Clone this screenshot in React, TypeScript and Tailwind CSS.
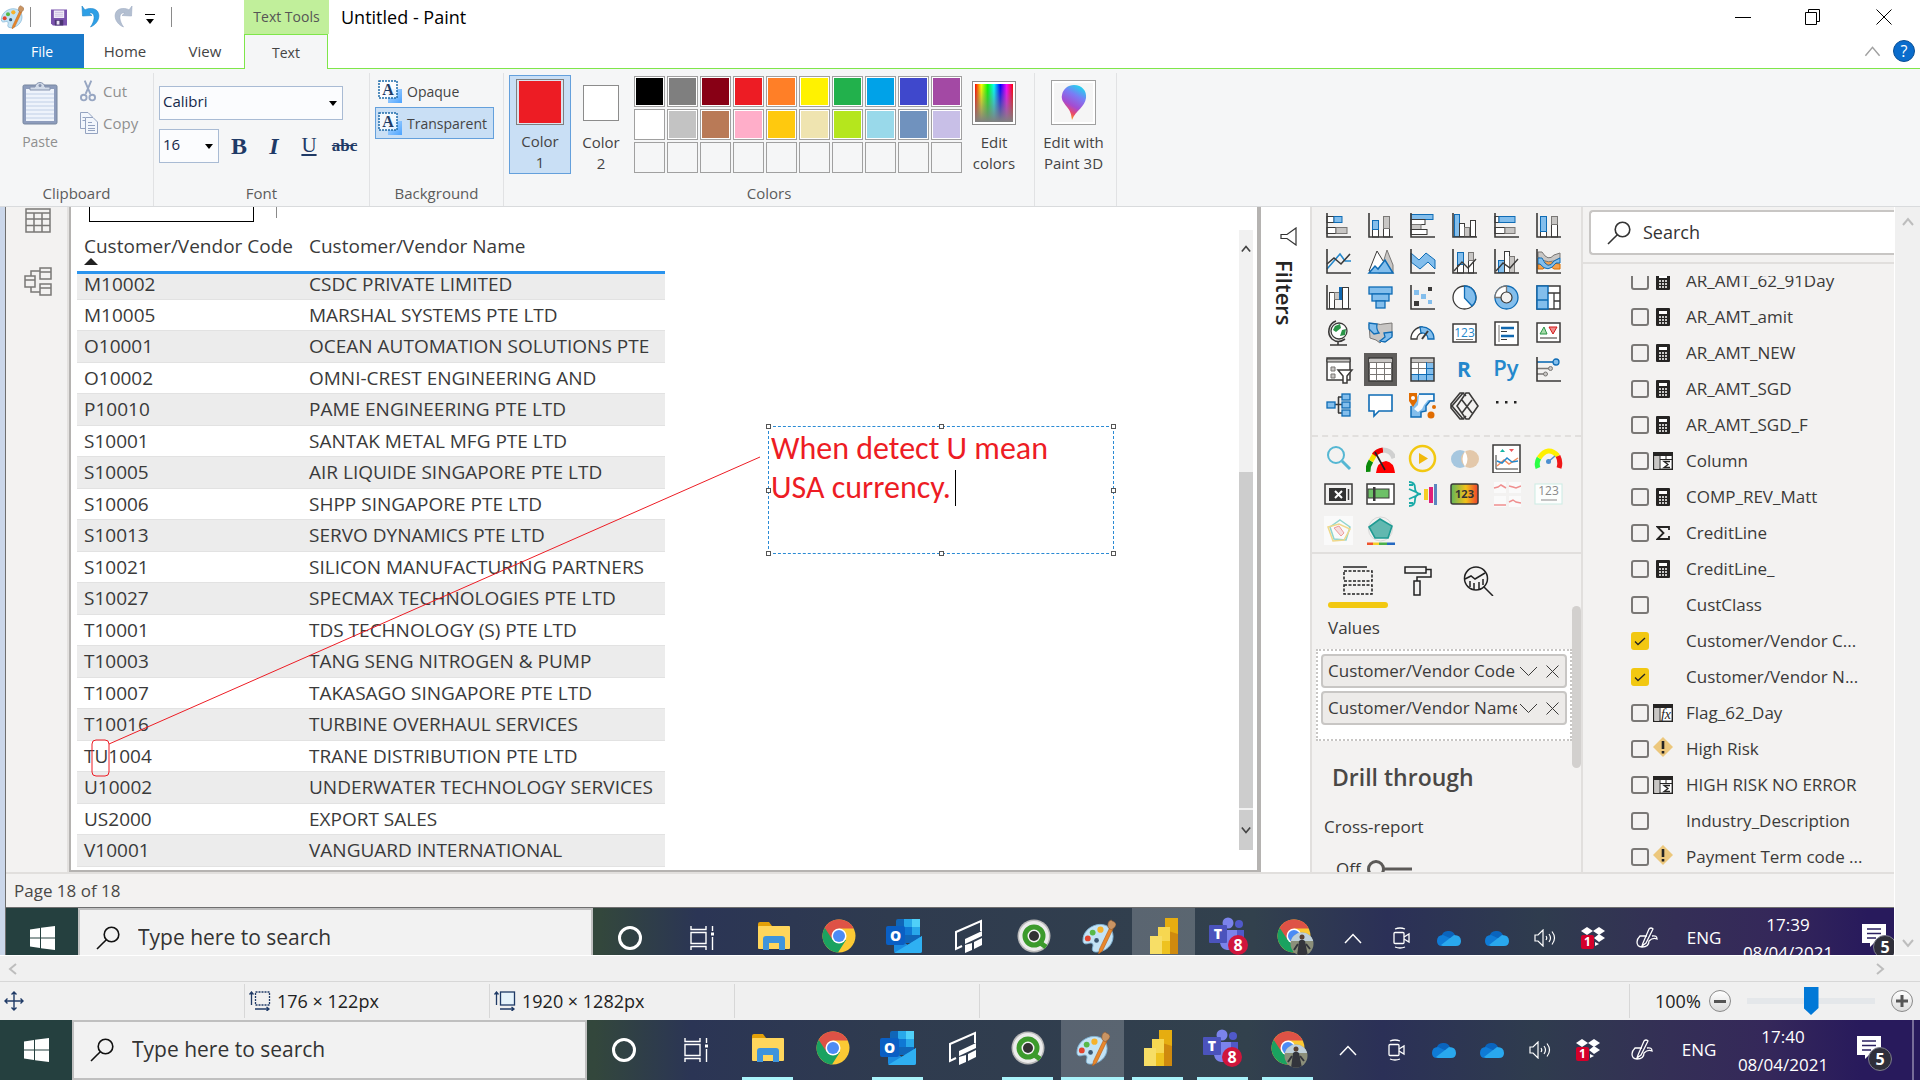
import type { ReactNode } from 'react'

const UI_FONT = 'font-[Open_Sans,Noto_Sans,sans-serif]'

const DARK = '#3b3a39'
const BLUE = '#83beec'
const BLUE_LINE = '#0f6cb5'
const GRAY = '#c8c6c4'
const GRAY_LINE = '#797775'

const PALETTE = [
  '#000000', '#7f7f7f', '#880015', '#ed1c24', '#ff7f27', '#fff200', '#22b14c', '#00a2e8', '#3f48cc', '#a349a4',
  '#ffffff', '#c3c3c3', '#b97a57', '#ffaec9', '#ffc90e', '#efe4b0', '#b5e61d', '#99d9ea', '#7092be', '#c8bfe7',
  '', '', '', '', '', '', '', '', '', '',
]

const ROWS: Array<[string, string]> = [
  ['M10002', 'CSDC PRIVATE LIMITED'],
  ['M10005', 'MARSHAL SYSTEMS PTE LTD'],
  ['O10001', 'OCEAN AUTOMATION SOLUTIONS PTE'],
  ['O10002', 'OMNI-CREST ENGINEERING AND'],
  ['P10010', 'PAME ENGINEERING PTE LTD'],
  ['S10001', 'SANTAK METAL MFG PTE LTD'],
  ['S10005', 'AIR LIQUIDE SINGAPORE PTE LTD'],
  ['S10006', 'SHPP SINGAPORE PTE LTD'],
  ['S10013', 'SERVO DYNAMICS PTE LTD'],
  ['S10021', 'SILICON MANUFACTURING PARTNERS'],
  ['S10027', 'SPECMAX TECHNOLOGIES PTE LTD'],
  ['T10001', 'TDS TECHNOLOGY (S) PTE LTD'],
  ['T10003', 'TANG SENG NITROGEN & PUMP'],
  ['T10007', 'TAKASAGO SINGAPORE PTE LTD'],
  ['T10016', 'TURBINE OVERHAUL SERVICES'],
  ['TU1004', 'TRANE DISTRIBUTION PTE LTD'],
  ['U10002', 'UNDERWATER TECHNOLOGY SERVICES'],
  ['US2000', 'EXPORT SALES'],
  ['V10001', 'VANGUARD INTERNATIONAL'],
]

type FieldIcon = 'calc' | 'column' | 'sigma' | 'fx' | 'warn' | 'none'

const FIELDS: Array<{ name: string; icon: FieldIcon; checked?: boolean }> = [
  { name: 'AR_AMT_62_91Day', icon: 'calc' },
  { name: 'AR_AMT_amit', icon: 'calc' },
  { name: 'AR_AMT_NEW', icon: 'calc' },
  { name: 'AR_AMT_SGD', icon: 'calc' },
  { name: 'AR_AMT_SGD_F', icon: 'calc' },
  { name: 'Column', icon: 'column' },
  { name: 'COMP_REV_Matt', icon: 'calc' },
  { name: 'CreditLine', icon: 'sigma' },
  { name: 'CreditLine_', icon: 'calc' },
  { name: 'CustClass', icon: 'none' },
  { name: 'Customer/Vendor C...', icon: 'none', checked: true },
  { name: 'Customer/Vendor N...', icon: 'none', checked: true },
  { name: 'Flag_62_Day', icon: 'fx' },
  { name: 'High Risk', icon: 'warn' },
  { name: 'HIGH RISK NO ERROR', icon: 'column' },
  { name: 'Industry_Description', icon: 'none' },
  { name: 'Payment Term code ...', icon: 'warn' },
]

/* ---------- small drawings ---------- */

function PaintIcon({ size }: { size: number }) {
  return (
    <svg width={size} height={size} viewBox="0 0 36 36">
      <path d="M16 6C25 4 33 9 33 18c0 9-8 16-17 16-4 0-5-2-4-5s0-5-4-4c-3 1-6 1-6-3C2 14 8 8 16 6Z" fill="#c3e3f5" stroke="#7fb2d3" />
      <circle cx="7" cy="20" r="3" fill="#e2452f" />
      <circle cx="12" cy="14" r="3" fill="#58b947" />
      <circle cx="20" cy="11" r="3.2" fill="#f6b22c" />
      <circle cx="16" cy="22" r="2.4" fill="#3c5872" />
      <path d="M30 8 33 10 22 33 18 36 19 31Z" fill="#e8872b" stroke="#b35c16" strokeWidth=".6" />
      <path d="M28 9c-1-4 0-7 3-8 2 2 5 2 5 5-1 3-3 4-5 5Z" fill="#c99463" stroke="#8b5a30" strokeWidth=".6" />
    </svg>
  )
}

function Magnifier({ size, color }: { size: number; color: string }) {
  return (
    <svg width={size} height={size} viewBox="0 0 24 24" fill="none" stroke={color} strokeWidth="1.6">
      <circle cx="15.5" cy="8.5" r="7.3" />
      <path d="M10.3 13.7 1 23" />
    </svg>
  )
}

function Chevron({ dir, size = 12, color = '#bdbdbd', weight = 2 }: { dir: 'up' | 'down' | 'left' | 'right'; size?: number; color?: string; weight?: number }) {
  const d = { up: 'M1 9 6 3 11 9', down: 'M1 3 6 9 11 3', left: 'M9 1 3 6 9 11', right: 'M3 1 9 6 3 11' }[dir]
  return (
    <svg width={size} height={size} viewBox="0 0 12 12" fill="none" stroke={color} strokeWidth={weight}>
      <path d={d} />
    </svg>
  )
}

function Caret() {
  return (
    <svg width="8" height="5" viewBox="0 0 8 5">
      <path d="M0 0H8L4 5Z" fill="#000" />
    </svg>
  )
}

function SelectionIcon() {
  return (
    <svg width="24" height="23" viewBox="0 0 24 23" className="shrink-0">
      <defs>
        <linearGradient id="selBlue" x1="0" y1="0" x2="1" y2="1">
          <stop offset="0" stopColor="#b9dcff" />
          <stop offset="1" stopColor="#4ba3ff" />
        </linearGradient>
      </defs>
      <rect x="10" y="9" width="14" height="14" fill="url(#selBlue)" />
      <rect x="1" y="1" width="18" height="17" fill="#fff" fillOpacity=".8" stroke="#1f6cab" strokeWidth="1.5" strokeDasharray="2 1" />
      <text x="10" y="15" textAnchor="middle" fontFamily="Liberation Serif, serif" fontWeight="700" fontSize="16" fill="#1f3c66">A</text>
    </svg>
  )
}

/* ---------- ribbon ---------- */

function Group({ label, className, children }: { label: string; className: string; children: ReactNode }) {
  return (
    <section className={`flex shrink-0 flex-col border-r border-[#e1e2e4] ${className}`}>
      <div className="flex flex-1">{children}</div>
      <div className="h-6 text-center text-[15px] leading-[22px] text-[#5c5c5c]">{label}</div>
    </section>
  )
}

function TitleBar() {
  return (
    <header className="relative shrink-0 bg-white">
      <div className="flex h-[34px] items-center">
        <div className="flex w-[244px] items-center">
          <PaintIcon size={24} />
          <span className="ml-1.5 h-5 w-px bg-[#8a8a8a]" />
          <button aria-label="Save" className="ml-5">
            <svg width="16" height="17" viewBox="0 0 17 17">
              <path d="M0 0H17V17H2L0 15Z" fill="#7a53ad" />
              <rect x="3" y="1" width="11" height="8" fill="#f4f0fa" />
              <path d="M4 3H13M4 5H13M4 7H13" stroke="#c6b8dd" />
              <rect x="4" y="11" width="9" height="6" fill="#4b3573" />
              <rect x="6" y="12" width="3" height="4" fill="#e9e2f5" />
            </svg>
          </button>
          <button aria-label="Undo" className="ml-3.5">
            <svg width="20" height="22" viewBox="0 0 20 22">
              <path d="M1 0 1.500 10 11 9.500 8 6.800C14 6 15 13 9.500 21 20 17 21 3 10.500 2.500 7.500 2.400 5 3 4 4Z" fill="#2d9fe6" stroke="#1c83c8" strokeWidth=".6" />
            </svg>
          </button>
          <button aria-label="Redo" className="ml-3">
            <svg width="20" height="22" viewBox="0 0 20 22">
              <path d="M19 0 18.500 10 9 9.500 12 6.800C6 6 5 13 10.500 21 0 17-1 3 9.500 2.500 12.500 2.400 15 3 16 4Z" fill="#b3bfd1" stroke="#9dabc2" strokeWidth=".6" />
            </svg>
          </button>
          <button aria-label="Customize" className="ml-3 flex flex-col items-center gap-1 pt-1">
            <span className="h-px w-2.5 bg-black" />
            <Caret />
          </button>
          <span className="ml-4 h-5 w-px bg-[#8a8a8a]" />
        </div>
        <div className="h-full w-[85px] bg-[#c1ef9b] text-center text-[14px] leading-[34px] text-[#555]">Text Tools</div>
        <h1 className="ml-3 flex-1 text-[18px] text-black">Untitled - Paint</h1>
        <div className="flex h-full">
          <button aria-label="Minimize" className="grid w-[70px] place-items-center">
            <span className="h-px w-4 bg-black" />
          </button>
          <button aria-label="Restore" className="grid w-[69px] place-items-center">
            <svg width="15" height="16" viewBox="0 0 15 16" fill="none" stroke="#000">
              <path d="M.5 3.500h11v12H.5ZM3.500 3.500V.5h11v12h-3" />
            </svg>
          </button>
          <button aria-label="Close" className="grid w-[73px] place-items-center">
            <svg width="16" height="16" viewBox="0 0 16 16" stroke="#000">
              <path d="M.5.5 15.500 15.500M15.500.5.5 15.500" />
            </svg>
          </button>
        </div>
      </div>
      <nav className="flex h-[35px] items-stretch text-[15px] text-[#444]">
        <button className="w-[84px] border-b border-[#7fe64a] bg-[#1979ca] text-[14px] text-white">File</button>
        <button className="w-[82px] border-b border-[#7fe64a]">Home</button>
        <button className="w-[78px] border-b border-[#7fe64a]">View</button>
        <button className="w-[84px] border-x border-t border-[#7fe64a] bg-[#f5f6f7] text-[14px]">Text</button>
        <div className="flex flex-1 items-center justify-end gap-3 border-b border-[#7fe64a] pr-[5px]">
          <Chevron dir="up" size={17} color="#a0a0a0" weight={1} />
          <button aria-label="Help" className="grid size-[22px] place-items-center rounded-full border border-[#0b4f94] bg-[#0a6ccc] text-[16px] leading-none text-white">?</button>
        </div>
      </nav>
    </header>
  )
}

function Ribbon() {
  return (
    <div className="flex h-[138px] shrink-0 overflow-hidden border-b border-[#d9dbdd] bg-[#f5f6f7] pt-1 text-[15px] text-[#444]">
      <Group label="Clipboard" className="w-[154px]">
        <button className="flex w-20 flex-col items-center pt-2 text-[14px] text-[#8f8f8f]">
          <svg width="36" height="44" viewBox="0 0 36 44">
            <rect x="1" y="4" width="34" height="39" rx="1.500" fill="#8d9cbc" stroke="#76869f" />
            <rect x="4" y="8" width="28" height="32" fill="#eef3fb" />
            <path d="M4 13H32M4 17H32M4 21H32M4 25H32M4 29H32M4 33H32M4 37H32" stroke="#c0cfe6" />
            <path d="M8 9V6h5c1-6 9-6 10 0h5v3Z" fill="#d2dbe9" stroke="#8694af" />
            <circle cx="18" cy="4.500" r="1.500" fill="#8694af" />
          </svg>
          <span className="mt-1.5">Paste</span>
        </button>
        <div className="flex flex-col gap-2 pt-[6px] text-[#8f8f8f]">
          <button className="flex h-6 items-center gap-[7px]">
            <svg width="16" height="24" viewBox="0 0 17 24" fill="none" stroke="#97a6c2" strokeWidth="2">
              <path d="M5 1 11 15M12 1 6 15" />
              <circle cx="4" cy="19" r="3" />
              <circle cx="13" cy="19" r="3" />
            </svg>
            Cut
          </button>
          <button className="flex h-6 items-center gap-[5px]">
            <svg width="18" height="22" viewBox="0 0 18 22" fill="#f2f6fc" stroke="#94a3c0">
              <path d="M.5.5H8L12.500 5V16.500H.5Z" />
              <path d="M5.500 5.500H13L17.500 10V21.500H5.500Z" />
              <path d="M8 10.500H12M8 13.500H15M8 16.500H15M8 18.500H15M2.500 5.500H5M2.500 8.500H5" />
            </svg>
            Copy
          </button>
        </div>
      </Group>

      <Group label="Font" className="w-[216px]">
        <div className="pl-[5px] pr-2 pt-[13px]">
          <div className="flex h-[34px] w-[184px] items-center border border-[#a9bbd4] bg-[#fbfcfe] pr-[5px]">
            <select aria-label="Font family" className="h-full flex-1 appearance-none bg-transparent px-[3px] pb-1 text-[15px] text-[#16294a]">
              <option>Calibri</option>
            </select>
            <Caret />
          </div>
          <div className="mt-2 flex items-center">
            <div className="flex h-[34px] w-[60px] items-center border border-[#a9bbd4] bg-[#fbfcfe] pr-[5px]">
              <select aria-label="Font size" className="h-full w-10 flex-1 appearance-none bg-transparent px-[3px] pb-1 text-[15px] text-[#16294a]">
                <option>16</option>
              </select>
              <Caret />
            </div>
            <div className="ml-0.5 flex font-[Liberation_Serif,serif] text-[#1f3a66]">
              <button className="w-9 text-[24px] font-bold">B</button>
              <button className="w-[34px] text-[24px] font-bold italic">I</button>
              <button className="w-9 text-[21px] underline underline-offset-2">U</button>
              <button className="w-[35px] text-[17px] font-bold line-through">abc</button>
            </div>
          </div>
        </div>
      </Group>

      <Group label="Background" className="w-[134px]">
        <div className="pl-[5px] pt-0.5 text-[14px]">
          <button className="flex h-8 w-[119px] items-center gap-[5px] px-[3px]">
            <SelectionIcon />
            Opaque
          </button>
          <button className="flex h-8 w-[119px] items-center gap-[5px] border border-[#64a0dc] bg-[#c9dff5] px-0.5">
            <SelectionIcon />
            Transparent
          </button>
        </div>
      </Group>

      <Group label="Colors" className="w-[531px]">
        <button className="ml-[5px] mt-0.5 flex h-[99px] w-[62px] flex-col items-center border border-[#64a0dc] bg-[#c9dff5] pt-[3px] leading-[21px]">
          <span className="mb-1.5 grid size-12 place-items-center border border-[#7f7f7f] bg-[#dbe3ee]">
            <span className="size-[42px] bg-[#ed1c24]" />
          </span>
          Color
          <span>1</span>
        </button>
        <button className="flex w-[60px] flex-col items-center pt-3 leading-[21px]">
          <span className="mb-[11px] size-9 border border-[#8c8c8c] bg-white" />
          Color
          <span>2</span>
        </button>
        <div className="ml-[3px] mt-[3px] grid h-[97px] grid-cols-10 gap-0.5">
          {PALETTE.map((c, i) => (
            <button
              key={i}
              aria-label={`Color ${c || 'empty'}`}
              className="size-[31px] border border-[#a0a0a0] p-px"
              style={{ backgroundColor: c ? '#fff' : undefined }}
            >
              <span className="block size-full" style={{ backgroundColor: c || undefined }} />
            </button>
          ))}
        </div>
        <button className="ml-[9px] flex w-[46px] flex-col items-center pt-2 leading-[21px]">
          <span className="mb-[7px] block size-11 shrink-0 border border-[#8c8c8c] bg-white p-0.5">
            <span className="block size-full bg-[linear-gradient(to_top,#808080,transparent),linear-gradient(to_right,#f00,#ff0,#0f0,#0ff,#00f,#f0f,#f00)]" />
          </span>
          Edit
          <span>colors</span>
        </button>
      </Group>

      <Group label="" className="w-[82px]">
        <button className="flex flex-1 flex-col items-center pr-1 pt-[7px] leading-[21px]">
          <span className="mb-[7px] grid size-[45px] shrink-0 place-items-center border border-[#a0a0a0] bg-white">
            <svg width="39" height="39" viewBox="0 0 39 39">
              <defs>
                <linearGradient id="drop" x1=".7" y1="0" x2=".3" y2="1">
                  <stop offset="0" stopColor="#1fd6ee" />
                  <stop offset=".3" stopColor="#7a7cf5" />
                  <stop offset=".6" stopColor="#a54bd0" />
                  <stop offset=".78" stopColor="#e8476f" />
                  <stop offset="1" stopColor="#ffb400" />
                </linearGradient>
              </defs>
              <rect width="39" height="39" fill="#f5f5f5" />
              <path d="M20 2c8 0 13 6 12 13-1 9-10 12-14 22-1-6-1-8-5-13C9 19 7 16 8 12 9 6 14 2 20 2Z" fill="url(#drop)" />
            </svg>
          </span>
          Edit with
          <span>Paint 3D</span>
        </button>
      </Group>
    </div>
  )
}

/* ---------- report page inside the picture ---------- */

function ReportTable() {
  return (
    <table className="w-[588px] table-fixed border-collapse text-left text-[19px] text-[#3a3a3a]">
      <thead>
        <tr className="h-[50px] border-b-[3px] border-[#2b94ee] align-top">
          <th className="w-[225px] whitespace-nowrap pl-[7px] pt-2.5 font-normal leading-7">
            Customer/Vendor Code
            <svg width="14" height="7" viewBox="0 0 14 7" className="-mt-0.5">
              <path d="M7 0 14 7H0Z" fill="#222" />
            </svg>
          </th>
          <th className="whitespace-nowrap pl-[7px] pt-2.5 font-normal leading-7">Customer/Vendor Name</th>
        </tr>
      </thead>
      <tbody>
        {ROWS.map(([code, name], i) => {
          const size = i === 0 ? 'h-[27px] align-top leading-[21px]' : i % 2 === 0 ? 'h-8 leading-[28px]' : 'h-[31px] leading-[30px]'
          const tone = i % 2 === 0 ? 'border-y border-[#e2e2e2] bg-[#ececec]' : ''
          const edge = i === 0 ? 'border-t-0' : ''
          return (
            <tr key={code} className={`${size} ${tone} ${edge}`}>
              <td className="whitespace-nowrap p-0 pl-[7px]">{code}</td>
              <td className="whitespace-nowrap p-0 pl-[7px]">{name}</td>
            </tr>
          )
        })}
      </tbody>
    </table>
  )
}

function Handle({ className }: { className: string }) {
  return <span className={`absolute size-[5px] border border-[#555] bg-white ${className}`} />
}

function ReportPage() {
  return (
    <div className="relative flex min-w-0 flex-1 overflow-hidden border-b-2 border-l-2 border-r-4 border-[#b5b3b1] bg-white">
      <div className="flex-1 pl-1.5">
        <div className="flex h-[15px] items-start gap-[22px] pl-3">
          <div className="h-[15px] w-[165px] border border-t-0 border-black" />
          <div className="h-[11px] w-px bg-[#8a8a8a]" />
        </div>
        <ReportTable />
      </div>
      <div className="mb-5 mr-1 mt-[23px] flex w-[14px] flex-col items-center bg-[#f1f1f1]">
        <div className="flex h-[242px] shrink-0 items-start pt-3.5">
          <Chevron dir="up" size={10} color="#444" />
        </div>
        <div className="mb-0.5 w-full flex-1 bg-[#cdcdcd]" />
        <div className="grid h-10 w-full place-items-center bg-[#cdcdcd]">
          <Chevron dir="down" size={10} color="#444" />
        </div>
      </div>

      {/* hand-drawn annotation over the page */}
      <svg className="absolute left-0 top-0" width="700" height="600" fill="none" stroke="#ed1c24">
        <path d="M38 537 689 250" />
        <rect x="21" y="533" width="17" height="36" rx="4" />
      </svg>
      <div className="absolute left-[697px] top-[219px] h-[128px] w-[346px] border border-dashed border-[#2a8ad4] pl-0.5 pt-0.5">
        <textarea
          aria-label="Annotation"
          defaultValue={'When detect U mean\nUSA currency.'}
          className="block h-full w-full resize-none overflow-hidden bg-transparent font-[Carlito,Lato,sans-serif] text-[32px] leading-[39px] text-[#ed1c24] outline-none"
        />
        <span className="absolute left-[186px] top-[43px] h-9 w-px bg-black" />
        <Handle className="-left-[3px] -top-[3px]" />
        <Handle className="-top-[3px] left-1/2 -ml-0.5" />
        <Handle className="-right-[3px] -top-[3px]" />
        <Handle className="-left-[3px] top-1/2 -mt-0.5" />
        <Handle className="-right-[3px] top-1/2 -mt-0.5" />
        <Handle className="-bottom-[3px] -left-[3px]" />
        <Handle className="-bottom-[3px] left-1/2 -ml-0.5" />
        <Handle className="-bottom-[3px] -right-[3px]" />
      </div>
    </div>
  )
}

/* ---------- visual gallery ---------- */

const axes = <path d="M1 0V24H25" fill="none" stroke={DARK} strokeWidth="1.600" />

const VISUALS: Array<{ name: string; art: ReactNode }> = [
  {
    name: 'Stacked bar chart',
    art: (
      <>
        <rect x="1" y="3.500" width="7" height="6" fill="#fff" stroke={DARK} />
        <rect x="8" y="3.500" width="8" height="6" fill={BLUE} stroke={BLUE_LINE} />
        <rect x="1" y="14.500" width="9" height="6" fill="#fff" stroke={DARK} />
        <rect x="10" y="14.500" width="11" height="6" fill={GRAY} stroke={GRAY_LINE} />
        {axes}
      </>
    ),
  },
  {
    name: 'Stacked column chart',
    art: (
      <>
        <rect x="4.500" y="16" width="6" height="8" fill="#fff" stroke={DARK} />
        <rect x="4.500" y="7.500" width="6" height="9" fill={BLUE} stroke={BLUE_LINE} />
        <rect x="15.500" y="15" width="6" height="9" fill="#fff" stroke={DARK} />
        <rect x="15.500" y="3.500" width="6" height="12" fill={GRAY} stroke={GRAY_LINE} />
        {axes}
      </>
    ),
  },
  {
    name: 'Clustered bar chart',
    art: (
      <>
        <rect x="1" y="1.500" width="22" height="5" fill={BLUE} stroke={BLUE_LINE} />
        <rect x="1" y="6.500" width="14" height="5" fill="#fff" stroke={DARK} />
        <rect x="1" y="11.500" width="10" height="5" fill={GRAY} stroke={GRAY_LINE} />
        <rect x="1" y="16.500" width="16" height="5" fill="#fff" stroke={DARK} />
        {axes}
      </>
    ),
  },
  {
    name: 'Clustered column chart',
    art: (
      <>
        <rect x="2.500" y="1.500" width="5" height="22" fill={BLUE} stroke={BLUE_LINE} />
        <rect x="7.500" y="10.500" width="5" height="13" fill="#fff" stroke={DARK} />
        <rect x="12.500" y="14.500" width="5" height="9" fill={GRAY} stroke={GRAY_LINE} />
        <rect x="18.500" y="7.500" width="5" height="16" fill="#fff" stroke={DARK} />
        {axes}
      </>
    ),
  },
  {
    name: '100% stacked bar chart',
    art: (
      <>
        <rect x="1" y="3.500" width="4" height="6" fill="#fff" stroke={DARK} />
        <rect x="5" y="3.500" width="16" height="6" fill={BLUE} stroke={BLUE_LINE} />
        <rect x="1" y="14.500" width="10" height="6" fill="#fff" stroke={DARK} />
        <rect x="11" y="14.500" width="10" height="6" fill={GRAY} stroke={GRAY_LINE} />
        {axes}
      </>
    ),
  },
  {
    name: '100% stacked column chart',
    art: (
      <>
        <rect x="4.500" y="18" width="6" height="6" fill="#fff" stroke={DARK} />
        <rect x="4.500" y="3.500" width="6" height="15" fill={BLUE} stroke={BLUE_LINE} />
        <rect x="15.500" y="11" width="6" height="13" fill="#fff" stroke={DARK} />
        <rect x="15.500" y="3.500" width="6" height="8" fill={GRAY} stroke={GRAY_LINE} />
        {axes}
      </>
    ),
  },
  {
    name: 'Line chart',
    art: (
      <>
        <path d="M1 20 14 5 19 12 25 12" fill="none" stroke="#2488cc" strokeWidth="1.600" />
        <path d="M1 15 8 9 15 15 24 5" fill="none" stroke={DARK} strokeWidth="1.600" />
        {axes}
      </>
    ),
  },
  {
    name: 'Area chart',
    art: (
      <>
        <path d="M12 24 19 1 25 16V24Z" fill={GRAY} stroke={GRAY_LINE} />
        <path d="M1 22 9 2 17 15 12 24Z" fill="#fff" stroke={DARK} />
        <path d="M1 24 7 17 10 20 17 11 25 24Z" fill={BLUE} stroke={BLUE_LINE} strokeWidth="1.500" />
      </>
    ),
  },
  {
    name: 'Stacked area chart',
    art: (
      <>
        <path d="M1 4 9 11 16 4 25 11V20L18 13 10 20 1 13Z" fill={BLUE} stroke={BLUE_LINE} />
        {axes}
      </>
    ),
  },
  {
    name: 'Line and stacked column chart',
    art: (
      <>
        <rect x="5.500" y="15" width="6" height="9" fill="#fff" stroke={DARK} />
        <rect x="5.500" y="3.500" width="6" height="12" fill={BLUE} stroke={BLUE_LINE} />
        <rect x="16.500" y="11" width="5" height="13" fill="#fff" stroke={DARK} />
        <rect x="16.500" y="3.500" width="5" height="8" fill={GRAY} stroke={GRAY_LINE} />
        <path d="M2 22 10 13 16 19 24 10" fill="none" stroke={DARK} strokeWidth="1.400" />
        {axes}
      </>
    ),
  },
  {
    name: 'Line and clustered column chart',
    art: (
      <>
        <rect x="4.500" y="11.500" width="6" height="12" fill={BLUE} stroke={BLUE_LINE} />
        <rect x="10.500" y="2.500" width="5" height="21" fill="#fff" stroke={DARK} />
        <rect x="15.500" y="7.500" width="5" height="16" fill={GRAY} stroke={GRAY_LINE} />
        <path d="M2 22 9 14 16 19 24 10" fill="none" stroke={DARK} strokeWidth="1.400" />
        {axes}
      </>
    ),
  },
  {
    name: 'Ribbon chart',
    art: (
      <>
        <path d="M2 15H7Q12 8 17 14L24 15V20H18Q12 14 7 20H2Z" fill="#f3a14e" stroke="#d86c00" />
        <path d="M2 3H6Q12 13 18 6L24 4V9Q12 17 2 8Z" fill={GRAY} stroke={GRAY_LINE} />
        <path d="M2 9H6Q12 22 18 12L24 9V14H20Q12 25 4 15H2Z" fill={BLUE} stroke={BLUE_LINE} />
        {axes}
      </>
    ),
  },
  {
    name: 'Waterfall chart',
    art: (
      <>
        <rect x="3.500" y="7.500" width="5" height="16" fill="#fff" stroke={DARK} />
        <rect x="8.500" y="7.500" width="5" height="7" fill={GRAY} stroke={GRAY_LINE} />
        <rect x="13.500" y="2.500" width="3" height="12" fill="#1168b0" stroke="#1168b0" />
        <rect x="16.500" y="2.500" width="6" height="21" fill="#fff" stroke={DARK} />
        {axes}
      </>
    ),
  },
  {
    name: 'Funnel',
    art: (
      <g fill={BLUE} stroke={BLUE_LINE} strokeWidth="1.300">
        <rect x="1" y="2" width="23" height="7" />
        <rect x="4" y="9" width="17" height="7" />
        <rect x="8" y="16" width="9" height="7" />
      </g>
    ),
  },
  {
    name: 'Scatter chart',
    art: (
      <>
        <rect x="4" y="5" width="5" height="5" fill="#83beec" />
        <rect x="18" y="2" width="4" height="4" fill={DARK} />
        <rect x="11" y="9" width="5" height="5" fill="#83beec" />
        <rect x="4" y="16" width="5" height="5" fill={DARK} />
        <rect x="18" y="15" width="4" height="4" fill="#83beec" />
        {axes}
      </>
    ),
  },
  {
    name: 'Pie chart',
    art: (
      <>
        <circle cx="12.500" cy="12.500" r="11.500" fill="#fff" stroke={DARK} strokeWidth="1.300" />
        <path d="M12.500 1A11.500 11.500 0 0 1 20 21L12.500 13Z" fill={BLUE} stroke={BLUE_LINE} strokeWidth="1.300" />
      </>
    ),
  },
  {
    name: 'Donut chart',
    art: (
      <>
        <circle cx="12.500" cy="12.500" r="11.500" fill={BLUE} stroke={BLUE_LINE} strokeWidth="1.300" />
        <path d="M12.500 1A11.500 11.500 0 0 0 1 12.500H12.500Z" fill="#fff" stroke={GRAY_LINE} strokeWidth="1.300" />
        <circle cx="12.500" cy="12.500" r="5.500" fill="#f3f2f1" stroke={DARK} strokeWidth="1.200" />
      </>
    ),
  },
  {
    name: 'Treemap',
    art: (
      <>
        <rect x="1" y="1" width="23" height="23" fill="#fff" stroke={DARK} strokeWidth="1.500" />
        <path d="M1 1H12V24H1Z" fill={BLUE} stroke={BLUE_LINE} strokeWidth="1.500" />
        <path d="M1 15H12" stroke={BLUE_LINE} strokeWidth="1.500" />
        <path d="M12 8H24M18 8V24M18 16H24" stroke={DARK} strokeWidth="1.300" />
      </>
    ),
  },
  {
    name: 'Map',
    art: (
      <>
        <circle cx="13" cy="10" r="8" fill="#fff" stroke={DARK} strokeWidth="1.300" />
        <path d="M9 5 14 3 15 7 10 11 7 9ZM16 9 20 8 19 14 14 15Z" fill="#2a9547" />
        <path d="M10 0A11 11 0 0 0 6 18Q12 23 19 18M12 20V24M4 24H21" fill="none" stroke={DARK} strokeWidth="1.600" />
      </>
    ),
  },
  {
    name: 'Filled map',
    art: (
      <>
        <path d="M1 3H10Q12 4 15 3L24 2V15L19 20H14L12 22 8 19 2 17Z" fill={GRAY} stroke={GRAY_LINE} />
        <path d="M1 2 9 3Q8 8 11 12L6 13 1 8Z" fill={BLUE} stroke={BLUE_LINE} strokeWidth="1.300" />
        <path d="M16 12 24 11V16L17 21 12 20 17 16Z" fill={BLUE} stroke={BLUE_LINE} strokeWidth="1.300" />
      </>
    ),
  },
  {
    name: 'Gauge',
    art: (
      <>
        <path d="M1 18A11.500 11.500 0 0 1 12 6V12A6 6 0 0 0 7 18Z" fill="#fff" stroke={DARK} strokeWidth="1.300" />
        <path d="M10 6A12 12 0 0 1 24 18H18A6 6 0 0 0 11 12Z" fill={BLUE} stroke={BLUE_LINE} strokeWidth="1.300" />
        <path d="M12 18 18 10" stroke={DARK} strokeWidth="2" />
      </>
    ),
  },
  {
    name: 'Card',
    art: (
      <>
        <rect x="1" y="3" width="23" height="18" fill="#fff" stroke={DARK} strokeWidth="1.500" />
        <text x="12.500" y="16" textAnchor="middle" fontSize="12" fill="#2488cc">123</text>
        <path d="M4 18.500H21" stroke={GRAY_LINE} />
      </>
    ),
  },
  {
    name: 'Multi-row card',
    art: (
      <>
        <rect x="1" y="1" width="23" height="23" fill="#fff" stroke={DARK} strokeWidth="1.500" />
        <path d="M5 4V21" stroke={GRAY_LINE} />
        <path d="M7 7H20M7 15H20" stroke="#1168b0" strokeWidth="2.400" />
        <path d="M7 10.500H13M7 18.500H13" stroke={DARK} />
      </>
    ),
  },
  {
    name: 'KPI',
    art: (
      <>
        <rect x="1" y="2" width="23" height="19" fill="#fff" stroke={DARK} strokeWidth="1.500" />
        <path d="M4 13 8 6 11 13Z" fill="#a6dba8" stroke="#2a9547" />
        <path d="M13 6H21L17 13Z" fill="#f08c8c" stroke="#d01818" />
        <path d="M4 17H21" stroke={GRAY_LINE} strokeWidth="1.500" />
      </>
    ),
  },
  {
    name: 'Slicer',
    art: (
      <>
        <rect x="1" y="1" width="23" height="22" fill="#fff" stroke={DARK} strokeWidth="1.500" />
        <path d="M1 2H24V5H1Z" fill={GRAY} stroke={DARK} />
        <path d="M5 10H9V14H5ZM5 17H9V21H5Z" fill={GRAY} stroke={GRAY_LINE} />
        <path d="M12 13H26L21 19V26H17V19Z" fill="#fff" stroke={DARK} strokeWidth="1.500" />
      </>
    ),
  },
  {
    name: 'Table',
    art: (
      <>
        <rect x="1" y="1" width="23" height="23" fill="#fff" stroke={DARK} strokeWidth="1.500" />
        <path d="M1 2H24V5H1Z" fill={GRAY} />
        <path d="M1 5.500H24M1 11.500H24M1 17.500H24M8.500 5V24M16.500 5V24" stroke={GRAY_LINE} />
      </>
    ),
  },
  {
    name: 'Matrix',
    art: (
      <>
        <rect x="1" y="1" width="23" height="23" fill="#fff" />
        <path d="M16 5H24V24H1V17H16Z" fill={BLUE} />
        <path d="M1 2H24V5H1Z" fill={GRAY} />
        <path d="M1 5.500H24M1 11.500H16M8.500 5V17" stroke={GRAY_LINE} />
        <path d="M16.500 5V24M16 11.500H24M1 17.500H24M8.500 17V24" stroke={BLUE_LINE} />
        <rect x="1" y="1" width="23" height="23" fill="none" stroke={DARK} strokeWidth="1.500" />
      </>
    ),
  },
  {
    name: 'R script visual',
    art: <text x="12" y="20" textAnchor="middle" fontSize="21" fontWeight="700" fill="#2488cc">R</text>,
  },
  {
    name: 'Python visual',
    art: <text x="12" y="19" textAnchor="middle" fontSize="22" fontWeight="600" fill="#2488cc">Py</text>,
  },
  {
    name: 'Key influencers',
    art: (
      <>
        <path d="M1 5H17" stroke={BLUE_LINE} strokeWidth="1.600" />
        <circle cx="20" cy="5" r="3" fill={BLUE} stroke={BLUE_LINE} strokeWidth="1.300" />
        <path d="M1 11.500H13M1 17H8" stroke={GRAY_LINE} strokeWidth="1.500" />
        <circle cx="14.500" cy="11.500" r="2" fill={GRAY} stroke={GRAY_LINE} />
        <circle cx="9.500" cy="17" r="2" fill={GRAY} stroke={GRAY_LINE} />
        {axes}
      </>
    ),
  },
  {
    name: 'Decomposition tree',
    art: (
      <>
        <path d="M8 11.500H16M12.500 4V20M12 4H16M12 20H16" fill="none" stroke={DARK} strokeWidth="1.600" />
        <g fill={BLUE} stroke={BLUE_LINE} strokeWidth="1.300">
          <rect x="1" y="9" width="8" height="6" />
          <rect x="16" y="1" width="8" height="6" />
          <rect x="16" y="9" width="8" height="6" />
          <rect x="16" y="17" width="8" height="6" />
        </g>
      </>
    ),
  },
  {
    name: 'Q&A',
    art: <path d="M1 2H24V18H11L6 23V18H1Z" fill="#fff" stroke={BLUE_LINE} strokeWidth="1.600" />,
  },
  {
    name: 'ArcGIS map',
    art: (
      <>
        <path d="M9 1H24V8H20L16 13V18L11 19V24H1V13" fill={BLUE} stroke={BLUE_LINE} strokeWidth="1.500" />
        <path d="M9 2H23V7H18L14 12 12 16 8 19 4 16 8 12Z" fill="#f6fafd" />
        <path d="M-1 0H7V8L3 14-1 8Z" fill="#e06c00" />
        <circle cx="3" cy="5" r="2" fill="#fff" />
        <circle cx="24" cy="14" r="2" fill="#e06c00" />
        <circle cx="21" cy="22" r="3.500" fill="#e06c00" />
      </>
    ),
  },
  {
    name: 'Power Apps',
    art: (
      <g fill="none" stroke={DARK} strokeWidth="1.600">
        <path d="M8 0H11L0 13 11 26H8L-1 15V11ZM11 0 14 3M11 26 14 23" />
        <path d="M14 0H17L26 13 17 26H14L5 13ZM10 7 20 20M20 7 10 20" />
      </g>
    ),
  },
  {
    name: 'More visuals',
    art: (
      <g fill="#222">
        <rect x="2" y="8" width="2.500" height="2.500" />
        <rect x="11" y="8" width="2.500" height="2.500" />
        <rect x="20" y="8" width="2.500" height="2.500" />
      </g>
    ),
  },
]

const CUSTOM_VISUALS: Array<{ name: string; art: ReactNode }> = [
  {
    name: 'Text filter',
    art: (
      <g fill="none" stroke="#55b7d3">
        <circle cx="12" cy="11" r="8" strokeWidth="2" />
        <path d="M18 17 26 25" strokeWidth="3" />
      </g>
    ),
  },
  {
    name: 'Dial gauge',
    art: (
      <>
        <path d="M2 28A18 18 0 0 1 5 17" fill="none" stroke="#0a8a0a" strokeWidth="5" />
        <path d="M5 17 9 10" stroke="#f5e400" strokeWidth="5" />
        <path d="M8 11Q11 7 17 6" fill="none" stroke="#e00" strokeWidth="5" />
        <path d="M17 6Q25 6 28 14" fill="none" stroke="#d0d0d0" strokeWidth="5" />
        <path d="M10 29Q11 18 20 17 28 18 29 29Z" fill="#f00" />
        <path d="M9 8 19 26" stroke="#222" strokeWidth="1.600" />
      </>
    ),
  },
  {
    name: 'Play axis',
    art: (
      <>
        <circle cx="14.500" cy="14.500" r="12.500" fill="none" stroke="#f2c811" strokeWidth="2.500" />
        <path d="M11 9 20 14.500 11 20Z" fill="#f2b90b" />
      </>
    ),
  },
  {
    name: 'Venn diagram',
    art: (
      <>
        <circle cx="10" cy="15" r="9" fill="#a6c7df" />
        <circle cx="20" cy="15" r="9" fill="#e3c8aa" />
        <path d="M15 7.500Q20 15 15 22.500 10 15 15 7.500Z" fill="#fff" />
      </>
    ),
  },
  {
    name: 'Power KPI',
    art: (
      <>
        <rect x="1" y="1" width="27" height="28" fill="#fff" stroke={DARK} strokeWidth="1.500" />
        <path d="M8 8 10.500 5 13 8Z" fill="#13b5a4" />
        <path d="M17 5H22L19.500 8Z" fill="#f0555b" />
        <path d="M4 11V25H26" fill="none" stroke={DARK} />
        <path d="M5 22 12 16 17 20 26 14" fill="none" stroke="#f58d5e" strokeWidth="1.500" />
        <path d="M5 17 10 19 15 14 20 18 26 17" fill="none" stroke="#2488cc" strokeWidth="1.500" />
      </>
    ),
  },
  {
    name: 'Tachometer',
    art: (
      <g fill="none" strokeWidth="5">
        <path d="M4 24Q2 19 5 14" stroke="#2bff45" />
        <path d="M5 14Q14 1 24 12" stroke="#fff000" />
        <path d="M24 12Q27 18 25 24" stroke="#f01818" />
        <path d="M14 18 21 12" stroke="#4b8fd0" strokeWidth="1.500" />
        <circle cx="14.500" cy="17.500" r="2.500" fill="#4b8fd0" stroke="none" />
      </g>
    ),
  },
  {
    name: 'Filter card',
    art: (
      <>
        <rect x="1" y="4" width="27" height="20" fill="#f3f2f1" stroke={DARK} strokeWidth="1.500" />
        <rect x="5" y="8" width="17" height="13" fill="#333" />
        <path d="M11 11 18 18M18 11 11 18" stroke="#fff" strokeWidth="2" />
        <path d="M24.500 9V20" stroke={DARK} strokeWidth="1.500" />
      </>
    ),
  },
  {
    name: 'Bullet chart',
    art: (
      <>
        <rect x="1" y="4" width="27" height="20" fill="#fff" stroke={DARK} strokeWidth="1.500" />
        <rect x="2" y="9" width="21" height="9" fill="#6dc067" stroke={DARK} />
        <rect x="7" y="7" width="2.500" height="14" fill={DARK} />
      </>
    ),
  },
  {
    name: 'Drill down tree',
    art: (
      <>
        <g fill="none" stroke="#1aaba8" strokeWidth="1.800">
          <path d="M1 2Q7 2 7 8T13 14M1 9 10 13M1 19 10 15M1 26Q7 26 7 20T13 14M1 5H5M1 23H5" />
        </g>
        <rect x="16" y="9" width="4" height="11" fill="#f5cf25" />
        <rect x="21" y="7" width="4" height="16" fill="#e0207a" />
        <rect x="26" y="4" width="3" height="21" fill="#5a86c0" />
      </>
    ),
  },
  {
    name: 'Card with states',
    art: (
      <>
        <defs>
          <linearGradient id="states">
            <stop offset="0" stopColor="#5fb65a" />
            <stop offset=".55" stopColor="#f2c21a" />
            <stop offset="1" stopColor="#f0402c" />
          </linearGradient>
        </defs>
        <rect x="1" y="4" width="27" height="20" rx="2" fill="url(#states)" stroke={DARK} strokeWidth="1.500" />
        <text x="14.500" y="18" textAnchor="middle" fontSize="11" fontWeight="700" fill="#333">123</text>
      </>
    ),
  },
  {
    name: 'Small multiples',
    art: (
      <>
        <path d="M2 2H14V13H2ZM17 2H29V13H17ZM2 16H14V27H2ZM17 16H29V27H17Z" fill="#fafafa" />
        <path d="M2 8 6 7 9 5 14 8M17 6 21 7 24 8 29 6M2 25H14M17 22 21 20 24 22 29 23" fill="none" stroke="#ef8f8f" strokeWidth="1.500" />
      </>
    ),
  },
  {
    name: 'Advance card',
    art: (
      <>
        <rect x="1" y="4" width="27" height="20" fill="#fcfefd" stroke="#ccebe4" />
        <text x="14.500" y="15" textAnchor="middle" fontSize="12" fill="#8a8a8a">123</text>
        <path d="M7 20H23" stroke="#c4c4c4" strokeWidth="2" />
      </>
    ),
  },
  {
    name: 'Radar chart',
    art: (
      <>
        <rect width="29" height="29" fill="#fafafa" />
        <path d="M16 4 26 11 22 24 10 23 6 11Z" fill="none" stroke="#8fd4cf" strokeWidth="1.500" />
        <path d="M4 11 15 8 26 13 20 24 9 25Z" fill="none" stroke="#efd88a" strokeWidth="1.500" />
        <path d="M10 12 15 10 20 17 17 20Z" fill="#f6dede" stroke="#ee9b9b" />
      </>
    ),
  },
  {
    name: 'Polar chart',
    art: (
      <>
        <circle cx="14.500" cy="13" r="12" fill="none" stroke="#d8d8d8" />
        <path d="M14 3 26 10 22 22 9 22 3 11Z" fill="#62b8b0" stroke="#1f9b93" strokeWidth="1.600" />
        <path d="M1 28H7" stroke="#f0522c" strokeWidth="3" />
        <path d="M7 28H13" stroke="#f6cf2a" strokeWidth="3" />
        <path d="M13 28H21" stroke="#4bb04b" strokeWidth="3" />
        <path d="M21 28H29" stroke="#2468c0" strokeWidth="3" />
      </>
    ),
  },
]

function FieldWell({ name }: { name: string }) {
  return (
    <div className="flex h-[34px] items-center rounded-sm border-2 border-[#c8c6c4] bg-[#edebe9] pl-[5px] pr-1">
      <span className="min-w-0 flex-1 overflow-hidden whitespace-nowrap text-[17px] text-[#3b3a39]">{name}</span>
      <button aria-label={`${name} options`} className="mx-0.5">
        <svg width="19" height="12" viewBox="0 0 19 12" fill="none" stroke="#3b3a39">
          <path d="M1 2 9.500 10.500 18 2" />
        </svg>
      </button>
      <button aria-label={`Remove ${name}`} className="ml-1.5 mr-0.5">
        <svg width="13" height="13" viewBox="0 0 13 13" stroke="#3b3a39">
          <path d="M.5.5 12.500 12.500M12.500.5.5 12.500" />
        </svg>
      </button>
    </div>
  )
}

function VisualizationsPane() {
  return (
    <aside className="flex w-[273px] shrink-0 flex-col overflow-hidden border-l-2 border-r-2 border-[#e1dfdd] bg-[#f3f2f1]">
      <div className="grid shrink-0 grid-cols-[repeat(6,42px)] border-b-2 border-dashed border-[#e1dfdd] pb-3 pl-[5px]">
        {VISUALS.map((v) => (
          <button key={v.name} aria-label={v.name} className="grid h-9 place-items-center">
            <span className={v.name === 'Table' ? 'bg-[#5f5d5b] p-1' : 'p-1'}>
              <svg width="25" height="25" viewBox="0 0 25 25" className="overflow-visible">
                {v.art}
              </svg>
            </span>
          </button>
        ))}
      </div>
      <div className="grid shrink-0 grid-cols-[repeat(6,42px)] border-b-2 border-[#e1dfdd] pb-1 pl-[5px] pt-[3px]">
        {CUSTOM_VISUALS.map((v) => (
          <button key={v.name} aria-label={v.name} className="grid h-9 place-items-center">
            <svg width="29" height="29" viewBox="0 0 29 29">
              {v.art}
            </svg>
          </button>
        ))}
      </div>

      <div className="flex min-h-0 flex-1 overflow-hidden">
        <div className="min-w-0 flex-1 pl-1">
          <div className="flex pl-3">
            <button aria-label="Fields" className="flex w-[60px] flex-col items-center gap-1.5 pt-3">
              <svg width="30" height="30" viewBox="0 0 30 30" fill="none" stroke="#222" strokeWidth="1.500">
                <path d="M0 1H24" />
                <path d="M1 5H29V15H1ZM1 19H29V28H1Z" strokeDasharray="3 1.500" />
              </svg>
              <span className="h-1.5 w-full rounded-full bg-[#f2c811]" />
            </button>
            <button aria-label="Format" className="flex w-[60px] flex-col items-center pt-3">
              <svg width="28" height="30" viewBox="0 0 28 30" fill="none" stroke="#222" strokeWidth="1.500">
                <rect x="1" y="1" width="21" height="6" />
                <path d="M22 3.500H27V11H13V15" />
                <rect x="10" y="15" width="6" height="14" />
              </svg>
            </button>
            <button aria-label="Analytics" className="flex w-[60px] flex-col items-center pt-3">
              <svg width="31" height="30" viewBox="0 0 31 30" fill="none" stroke="#222" strokeWidth="1.500">
                <circle cx="13" cy="12.500" r="11.500" />
                <path d="M21 21 30 30M2 13 8 10 12 13 22 7M7 15V21M11 17V24M16 16V23M20 13V19" />
              </svg>
            </button>
          </div>
          <h2 className="pl-3 pt-2 text-[17px] leading-6 text-[#3b3a39]">Values</h2>
          <div className="mt-[9px] flex h-[92px] flex-col gap-[3px] border-2 border-dotted border-[#c8c6c4] bg-white p-[3px]">
            <FieldWell name="Customer/Vendor Code" />
            <FieldWell name="Customer/Vendor Name" />
          </div>
          <h2 className="pl-4 pt-5 text-[23px] font-semibold leading-8 text-[#4a4846]">Drill through</h2>
          <p className="pl-2 pt-[22px] text-[17px] leading-6 text-[#3b3a39]">Cross-report</p>
          <label className="flex items-center gap-1.5 pl-5 pt-[18px] text-[17px] leading-6 text-[#3b3a39]">
            Off
            <input type="checkbox" className="sr-only" />
            <svg width="46" height="18" viewBox="0 0 46 18" fill="none" stroke="#5c5a58" strokeWidth="3">
              <circle cx="9" cy="9" r="7.500" />
              <path d="M16 9H45" />
            </svg>
          </label>
        </div>
        <div className="mt-[52px] h-[162px] w-[9px] shrink-0 rounded-full bg-[#d2d0ce]" />
      </div>
    </aside>
  )
}

function FieldGlyph({ icon }: { icon: FieldIcon }) {
  if (icon === 'calc') {
    return (
      <svg width="14" height="18" viewBox="0 0 14 18">
        <rect width="14" height="18" rx="1" fill="#252423" />
        <rect x="3" y="3" width="8" height="3" fill="#fff" />
        <path d="M3 9H11M3 12H11M3 15H11" stroke="#fff" strokeWidth="1.600" strokeDasharray="2 1" />
      </svg>
    )
  }
  if (icon === 'sigma') {
    return (
      <svg width="14" height="14" viewBox="0 0 14 14" fill="none" stroke="#252423" strokeWidth="1.800">
        <path d="M13 4V1H1.500L7.500 7 1.500 13H13V10" />
      </svg>
    )
  }
  if (icon === 'warn') {
    return (
      <svg width="20" height="20" viewBox="0 0 20 20" className="mb-1">
        <path d="M10 0 20 10 10 20 0 10Z" fill="#ecc77c" />
        <path d="M10 4V12M10 14V16.500" stroke="#252423" strokeWidth="2.600" />
      </svg>
    )
  }
  if (icon === 'none') return null
  return (
    <svg width="20" height="18" viewBox="0 0 20 18">
      <rect x=".7" y=".7" width="18.600" height="16.600" fill="#fff" stroke="#252423" strokeWidth="1.400" />
      <rect width="20" height="4" fill="#252423" />
      <rect x="1.500" y="4" width="5" height="13" fill={GRAY} />
      <path d="M7 4V17" stroke="#252423" />
      {icon === 'column' ? (
        <>
          <path d="M7 7.500H19M13 4V7" stroke="#252423" />
          <path d="M17 9.500H11L15 12.500 11 15.500H17" fill="none" stroke="#252423" strokeWidth="1.300" />
        </>
      ) : (
        <text x="13" y="15" textAnchor="middle" fontFamily="Liberation Serif, serif" fontStyle="italic" fontSize="14" fill="#252423">fx</text>
      )}
    </svg>
  )
}

function FieldsPane() {
  return (
    <aside className="flex w-[311px] shrink-0 flex-col overflow-hidden bg-[#f3f2f1]">
      <div className="shrink-0 border-b-2 border-[#e1dfdd] pb-[7px] pl-1.5 pt-[3px]">
        <label className="flex h-[45px] items-center gap-3 rounded-l-sm border-2 border-r-0 border-[#c8c6c4] bg-white pl-4">
          <Magnifier size={24} color="#333" />
          <input type="text" aria-label="Search fields" placeholder="Search" className="min-w-0 flex-1 bg-transparent text-[18px] outline-none placeholder:text-[#333] placeholder:opacity-100" />
        </label>
      </div>
      <div className="mt-3 flex min-h-0 flex-1 flex-col justify-start overflow-hidden">
        <ul className="-mt-[13px]">
          {FIELDS.map((f) => (
            <li key={f.name}>
              <label className="flex h-9 items-center pl-12 text-[17px] text-[#3b3a39]">
                <span className="relative grid size-[18px] shrink-0 place-items-center">
                  <input
                    type="checkbox"
                    defaultChecked={f.checked}
                    className="size-[18px] appearance-none rounded-[3px] border-2 border-[#7a7876] checked:border-[#f2c811] checked:bg-[#f2c811]"
                  />
                  {f.checked && (
                    <svg width="12" height="9" viewBox="0 0 12 9" className="pointer-events-none absolute" fill="none" stroke="#252423" strokeWidth="1.300">
                      <path d="M1 4.500 4 7.500 11 1" />
                    </svg>
                  )}
                </span>
                <span className="grid w-7 shrink-0 place-items-center">
                  <FieldGlyph icon={f.icon} />
                </span>
                <span className="whitespace-nowrap pl-[9px]">{f.name}</span>
              </label>
            </li>
          ))}
        </ul>
      </div>
    </aside>
  )
}

/* ---------- taskbar ---------- */

function ChromeIcon({ avatar }: { avatar?: boolean }) {
  return (
    <svg width="40" height="40" viewBox="0 0 40 40">
      <circle cx="20" cy="20" r="16.500" fill="#fbc934" />
      <path d="M20 20 5.700 11.800A16.500 16.500 0 0 0 19 36.500L27 24 13 24Z" fill="#1aa260" />
      <path d="M20 12.500H34.700A16.500 16.500 0 0 0 5.700 11.800L13 23Z" fill="#de5246" />
      <circle cx="20" cy="20" r="7.500" fill="#fff" />
      <circle cx="20" cy="20" r="6" fill="#4c8bf5" />
      {avatar && (
        <>
          <defs>
            <clipPath id="face">
              <circle cx="28" cy="28" r="11.500" />
            </clipPath>
          </defs>
          <g clipPath="url(#face)">
            <rect x="16" y="16" width="24" height="24" fill="#8b8f7a" />
            <rect x="16" y="16" width="24" height="9" fill="#bfd0da" />
            <path d="M23 40 25 25Q28 22 31 25L34 40Z" fill="#33353c" />
            <path d="M24 28 20 34M32 28 36 33" stroke="#33353c" strokeWidth="2" />
            <circle cx="28" cy="21" r="2.500" fill="#5a4234" />
          </g>
        </>
      )}
    </svg>
  )
}

const APP_ICONS: Record<string, ReactNode> = {
  Explorer: (
    <svg width="34" height="28" viewBox="0 0 34 28">
      <path d="M1 2Q1 0 3 0H12L15 4H17V8H1Z" fill="#e3a008" />
      <rect x="1" y="4" width="32" height="23" rx="1" fill="#ffd65c" />
      <path d="M6 28V17Q6 14 9 14H25Q28 14 28 17V28H22V21H12V28Z" fill="#3f94dc" />
    </svg>
  ),
  Chrome: <ChromeIcon />,
  Outlook: (
    <svg width="36" height="34" viewBox="0 0 36 34">
      <rect x="10" y="0" width="24" height="24" rx="2" fill="#1066b8" />
      <path d="M18 0H26V8H18Z" fill="#28a8ea" />
      <path d="M26 0H34V8H26Z" fill="#50d0f8" />
      <path d="M18 8H26V16H18Z" fill="#0f78d4" />
      <path d="M26 8H34V16H26Z" fill="#28a8ea" />
      <path d="M8 17 22 26 36 17V32Q36 34 34 34H10Q8 34 8 32Z" fill="#1a8be0" />
      <path d="M8 34 36 17V32Q36 34 34 34Z" fill="#2fb0f2" />
      <rect x="0" y="7" width="19" height="19" rx="2" fill="#0a5fc4" />
      <text x="9.500" y="22" textAnchor="middle" fontSize="14" fontWeight="800" fill="#fff">O</text>
    </svg>
  ),
  Files: (
    <svg width="30" height="34" viewBox="0 0 30 34" fill="none" stroke="#fff" strokeWidth="2">
      <path d="M27 12V2L2 13V30L8 27" />
      <path d="M11 20 28 12V17L11 25ZM11 26 18 24V31L11 34ZM20 23 28 19V26L20 30Z" fill="#fff" stroke="none" />
    </svg>
  ),
  Qlik: (
    <svg width="34" height="34" viewBox="0 0 34 34">
      <circle cx="17" cy="17" r="16.500" fill="#b9b9b9" />
      <circle cx="17" cy="17" r="15" fill="#ececec" />
      <circle cx="17" cy="17" r="9" fill="#f4f4f4" stroke="#3c9b2c" strokeWidth="5" />
      <path d="M22 23 29 28" stroke="#3c9b2c" strokeWidth="5" />
      <circle cx="17" cy="17" r="5" fill="#333" />
    </svg>
  ),
  Paint: <PaintIcon size={35} />,
  'Power BI': (
    <svg width="28" height="36" viewBox="0 0 28 36">
      <rect x="15" y="0" width="13" height="36" fill="#cf8a0e" />
      <path d="M15 0H28V16L15 12Z" fill="#e6ad10" />
      <rect x="8" y="9" width="12" height="27" fill="#eec21f" />
      <rect x="8" y="9" width="12" height="14" fill="#f6d751" />
      <rect x="0" y="18" width="12" height="18" fill="#f7de66" />
    </svg>
  ),
  Teams: (
    <svg width="40" height="38" viewBox="0 0 40 38">
      <circle cx="19" cy="6" r="5.500" fill="#7b83eb" />
      <circle cx="30" cy="7" r="4" fill="#5059c9" />
      <path d="M24 13H35V22Q34 29 26 28Z" fill="#5059c9" />
      <path d="M11 13H28V26Q26 34 18 33 12 32 11 26Z" fill="#7b83eb" />
      <rect x="0" y="8" width="18" height="18" rx="1" fill="#4b53bc" />
      <text x="9" y="22" textAnchor="middle" fontSize="14" fontWeight="800" fill="#fff">T</text>
      <circle cx="29" cy="28" r="10" fill="#d0163c" />
      <text x="29" y="34" textAnchor="middle" fontSize="16" fontWeight="700" fill="#fff">8</text>
    </svg>
  ),
  'Chrome profile': <ChromeIcon avatar />,
}

function Cloud() {
  return (
    <svg width="24" height="16" viewBox="0 0 24 16">
      <path d="M4 7Q6 0 12 1 16 1 18 5L12 9Z" fill="#0a64bd" />
      <path d="M0 11Q0 5 6 5L17 10 8 16H5Q0 16 0 11Z" fill="#0f7bd6" />
      <path d="M4 15 17 5Q24 5 24 11 24 16 19 16H6Z" fill="#29a8ee" />
    </svg>
  )
}

function Taskbar({ time, active, indicators }: { time: string; active: string; indicators: string[] }) {
  return (
    <div className="flex h-[60px] w-full items-stretch overflow-hidden bg-[linear-gradient(to_right,#25403f_0%,#25403f_4%,#33473c_31%,#2b3555_36%,#2f3b4f_46%,#32414d_65%,#2b3057_72%,#2f3c4e_80%,#342f56_87%,#35285a_92%,#281a5c_97%)] text-white">
      <button aria-label="Start" className="grid w-[72px] shrink-0 place-items-center">
        <svg width="25" height="24" viewBox="0 0 25 24" fill="#fff">
          <path d="M0 3.500 10 2V11.500H0ZM11 1.800 25 0V11.500H11ZM0 12.500H10V22L0 20.500ZM11 12.500H25V24L11 22.200Z" />
        </svg>
      </button>
      <label className="flex w-[515px] shrink-0 items-center gap-3 border-2 border-[#c0c0c0] bg-[#f2f2f2] pl-4">
        <Magnifier size={24} color="#111" />
        <input type="text" aria-label="Search Windows" placeholder="Type here to search" className="min-w-0 flex-1 bg-transparent pl-1.5 text-[21px] outline-none placeholder:text-[#333] placeholder:opacity-100" />
      </label>
      <button aria-label="Cortana" className="grid w-[73px] shrink-0 place-items-center">
        <span className="size-6 rounded-full border-[3px] border-white" />
      </button>
      <button aria-label="Task view" className="grid w-[73px] shrink-0 place-items-center">
        <svg width="25" height="24" viewBox="0 0 25 24" fill="none" stroke="#fff" strokeWidth="1.400">
          <path d="M1 0V3.500H16V0M1 24V20.500H16V24M1 6.500H16V17.500H1ZM22.500 0V5M22.500 11V24" />
          <rect x="21" y="6.500" width="3" height="3" fill="#fff" stroke="none" />
        </svg>
      </button>
      <div className="flex shrink-0 pl-0.5">
        {Object.keys(APP_ICONS).map((name) => (
          <button
            key={name}
            aria-label={name}
            className={`relative mx-px grid w-[63px] shrink-0 place-items-center pb-1 ${name === active ? 'bg-white/20' : ''}`}
          >
            {APP_ICONS[name]}
            {indicators.includes(name) && (
              <span className={`absolute bottom-0 h-[3px] bg-[#a9f3fb] ${name === active ? 'inset-x-0' : 'inset-x-1.5'}`} />
            )}
          </button>
        ))}
      </div>

      <div className="ml-auto flex shrink-0 items-stretch">
        <button aria-label="Show hidden icons" className="grid w-12 place-items-center">
          <svg width="18" height="11" viewBox="0 0 18 11" fill="none" stroke="#fff" strokeWidth="1.500">
            <path d="M1 10 9 1.500 17 10" />
          </svg>
        </button>
        <button aria-label="Meet now" className="grid w-12 place-items-center">
          <svg width="17" height="22" viewBox="0 0 17 22" fill="none" stroke="#fff" strokeWidth="1.300">
            <rect x="1" y="5.500" width="10" height="11" rx="1" />
            <path d="M11 10 16 7V15L11 12M2 2Q7 0 12 2M2 20Q7 22 12 20" />
          </svg>
        </button>
        <button aria-label="OneDrive" className="grid w-12 place-items-center"><Cloud /></button>
        <button aria-label="OneDrive work" className="grid w-12 place-items-center"><Cloud /></button>
        <button aria-label="Volume" className="grid w-12 place-items-center">
          <svg width="23" height="18" viewBox="0 0 23 18" fill="none" stroke="#fff" strokeWidth="1.200">
            <path d="M1 6H4L9 1V17L4 12H1ZM12 7Q13.500 9 12 11M15 5Q18 9 15 13M18 2.500Q23 9 18 15.500" />
          </svg>
        </button>
        <button aria-label="Dropbox" className="grid w-12 place-items-center">
          <svg width="24" height="23" viewBox="0 0 24 23" className="overflow-visible">
            <path d="M6 0 12 4 6 8 0 4ZM18 0 24 4 18 8 12 4ZM18 7 24 11 18 15 13 11ZM14 15 18 17 14 19Z" fill="#fff" />
            <rect x="0" y="8" width="13" height="14" rx="2" fill="#d4002a" />
            <text x="6.500" y="19" textAnchor="middle" fontSize="12" fontWeight="700" fill="#fff">1</text>
          </svg>
        </button>
        <button aria-label="Windows Ink" className="grid w-[60px] place-items-center">
          <svg width="22" height="22" viewBox="0 0 22 22" fill="none" stroke="#fff" strokeWidth="1.300">
            <path d="M7 16 13 2Q15 0 17 2L10 16 6 19ZM11 9H4Q1 12 1 15 1 20 6 20 13 20 13 14 17 10 21 12 21 8 16 9" />
          </svg>
        </button>
        <button className="w-[54px] text-[17px]">ENG</button>
        <button className="w-[114px] whitespace-nowrap pt-0.5 text-center text-[17px] leading-7">
          <span className="block">{time}</span>
          <span className="block">08/04/2021</span>
        </button>
        <button aria-label="Notifications" className="relative grid w-[72px] place-items-center pr-1 pt-1">
          <svg width="38" height="38" viewBox="0 0 38 38">
            <path d="M2 3H26V22H14L10 26V22H2Z" fill="#fff" />
            <path d="M7 8H21M7 12.500H21M7 17H16" stroke="#2b2060" strokeWidth="1.300" />
            <circle cx="25" cy="26" r="11.500" fill="#2f2f3a" stroke="#7c7c8c" />
            <text x="25" y="32" textAnchor="middle" fontSize="16" fontWeight="700" fill="#fff">5</text>
          </svg>
        </button>
        <div className="w-2 border-l-2 border-[#776d99]" />
      </div>
    </div>
  )
}

/* ---------- workspace ---------- */

function Picture() {
  return (
    <div className="flex min-w-0 flex-1 overflow-hidden">
      <div className="w-[5px] shrink-0 bg-[#cbd7ea]" />
      <div className="flex min-w-0 flex-1 flex-col overflow-hidden border-l border-[#6f6f6f]">
        <div className="flex min-h-0 flex-1 overflow-hidden">
          <div className="flex w-[61px] shrink-0 flex-col items-center gap-[34px] bg-[#f3f2f1] pl-[3px]">
            <svg width="26" height="25" viewBox="0 0 26 25" fill="none" stroke="#7a7876" strokeWidth="1.500" className="mt-px">
              <path d="M1 1H25V24H1ZM1 5H25M1 11H25M1 17.500H25M9 5V24M17 5V24" />
            </svg>
            <svg width="28" height="29" viewBox="0 0 28 29" fill="none" stroke="#7a7876" strokeWidth="1.500">
              <path d="M1 9H11V20H1ZM1 13H11M16 1H27V12H16ZM16 5H27M16 17H27V28H16ZM16 21H27M7 9V4H16M7 20V25H16" />
            </svg>
          </div>
          <div className="w-0.5 shrink-0 bg-[#e3e1df]" />
          <ReportPage />
          <div className="flex w-[49px] shrink-0 flex-col items-center gap-3.5 bg-white pt-5">
            <svg width="17" height="19" viewBox="0 0 17 19" fill="none" stroke="#333" strokeWidth="1.200" className="ml-1.5">
              <path d="M16 1V18L7 11.500H1V7.500H7Z" />
            </svg>
            <span className="pr-0.5 text-[22px] font-semibold leading-6 text-[#252423] [writing-mode:vertical-rl]">Filters</span>
          </div>
          <VisualizationsPane />
          <FieldsPane />
        </div>
        <div className="flex h-[36px] shrink-0 items-center border-b border-t-2 border-b-[#6f6f6f] border-t-[#e1dfdd] bg-[#f3f2f1] pl-2 text-[17px] text-[#4a4846]">Page 18 of 18</div>
        <div className="h-[47px] shrink-0 overflow-hidden">
          <div className="w-[calc(100%+31px)]">
            <Taskbar time="17:39" active="Power BI" indicators={[]} />
          </div>
        </div>
      </div>
    </div>
  )
}

function StatusBar() {
  return (
    <footer className="flex h-[39px] shrink-0 items-stretch border-t border-[#d7d7d7] bg-[#f0f0f0] py-0.5 text-[18px] text-[#222]">
      <div className="flex w-[245px] items-center border-r border-[#d7d7d7] pl-1">
        <svg width="20" height="20" viewBox="0 0 20 20" fill="none" stroke="#1f3a66" strokeWidth="1.400">
          <path d="M10 1V19M1 10H19M7.500 3.500 10 1 12.500 3.500M7.500 16.500 10 19 12.500 16.500M3.500 7.500 1 10 3.500 12.500M16.500 7.500 19 10 16.500 12.500" />
        </svg>
      </div>
      <div className="flex w-[245px] items-center gap-1.5 border-r border-[#d7d7d7] pl-1">
        <svg width="22" height="20" viewBox="0 0 22 20" fill="none" stroke="#1f3a66" strokeWidth="1.300">
          <path d="M2.500 14V1M.5 3.500 2.500 1 4.500 3.500M6 18H20M17.500 16 20 18 17.500 20" />
          <rect x="6.500" y="1" width="14" height="13" strokeDasharray="2 1" />
        </svg>
        176 × 122px
      </div>
      <div className="flex w-[245px] items-center gap-1.5 border-r border-[#d7d7d7] pl-1">
        <svg width="22" height="20" viewBox="0 0 22 20" fill="none" stroke="#1f3a66" strokeWidth="1.300">
          <path d="M2.500 14V1M.5 3.500 2.500 1 4.500 3.500M6 18H20M17.500 16 20 18 17.500 20" />
          <rect x="6.500" y="1" width="14" height="13" fill="#e6f3fb" />
        </svg>
        1920 × 1282px
      </div>
      <div className="w-[245px] border-r border-[#d7d7d7]" />
      <div className="ml-auto flex items-center border-l border-[#d7d7d7] pl-[25px]">
        <span className="w-[54px]">100%</span>
        <button aria-label="Zoom out" className="grid size-[22px] place-items-center rounded-full border border-[#8a8a8a] bg-gradient-to-b from-white to-[#dcdcdc]">
          <span className="h-[3px] w-3 bg-[#555]" />
        </button>
        <input
          type="range"
          aria-label="Zoom"
          min={0}
          max={100}
          defaultValue={50}
          className="mx-4 h-7 w-32 appearance-none bg-transparent bg-[linear-gradient(#e4e7ea,#e4e7ea)] bg-[length:100%_6px] bg-center bg-no-repeat [&::-webkit-slider-thumb]:h-7 [&::-webkit-slider-thumb]:w-[15px] [&::-webkit-slider-thumb]:appearance-none [&::-webkit-slider-thumb]:bg-[#0078d7] [&::-webkit-slider-thumb]:[clip-path:polygon(0_0,100%_0,100%_75%,50%_100%,0_75%)]"
        />
        <button aria-label="Zoom in" className="relative mr-[7px] grid size-[22px] place-items-center rounded-full border border-[#8a8a8a] bg-gradient-to-b from-white to-[#dcdcdc]">
          <svg width="12" height="12" viewBox="0 0 12 12" stroke="#555" strokeWidth="3">
            <path d="M6 0V12M0 6H12" />
          </svg>
        </button>
      </div>
    </footer>
  )
}

export default function App() {
  return (
    <div className={`flex h-screen flex-col overflow-hidden bg-[#f0f0f0] ${UI_FONT}`}>
      <TitleBar />
      <Ribbon />
      <main className="flex min-h-0 flex-1">
        <Picture />
        <div className="flex w-[26px] shrink-0 flex-col items-center justify-between border-l border-white bg-[#f0f0f0] pb-1.5 pt-[9px]">
          <Chevron dir="up" />
          <Chevron dir="down" />
        </div>
      </main>
      <div className="flex h-[26px] shrink-0 items-center justify-between border-t border-white pl-[7px] pr-[34px]">
        <Chevron dir="left" />
        <Chevron dir="right" />
      </div>
      <StatusBar />
      <Taskbar
        time="17:40"
        active="Paint"
        indicators={['Explorer', 'Outlook', 'Qlik', 'Paint', 'Power BI', 'Teams', 'Chrome profile']}
      />
    </div>
  )
}
